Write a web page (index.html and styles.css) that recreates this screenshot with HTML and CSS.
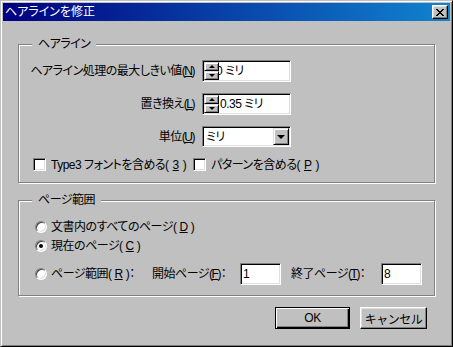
FILE: index.html
```html
<!DOCTYPE html>
<html lang="ja">
<head>
    <meta charset="UTF-8">
    <meta name="viewport" content="width=device-width, initial-scale=1.0">
    <title>ヘアラインを修正</title>

    <link rel="stylesheet" href="styles.css">
</head>
<body>
<div class="window">
    <div class="titlebar">
        <span class="title">ヘアラインを修正</span>
        <button class="close">
            <svg width="8" height="7" viewBox="0 0 8 7" shape-rendering="crispEdges">
                <path d="M0 0h2v1H0zM6 0h2v1H6zM1 1h2v1H1zM5 1h2v1H5zM2 2h4v1H2zM3 3h2v1H3zM2 4h4v1H2zM1 5h2v1H1zM5 5h2v1H5zM0 6h2v1H0zM6 6h2v1H6z" fill="#000"/>
            </svg>
        </button>
    </div>

    <div class="content">
        <fieldset class="group hairline">
            <legend>ヘアライン</legend>
            <div class="form">
                <span class="label">ヘアライン処理の最大しきい値(<span class="key">N</span>)</span>
                <div class="field spinner">
                    <span class="spin"><span class="up"></span><span class="down"></span></span>
                    <span class="value scrolled">0 ミリ</span>
                </div>

                <span class="label">置き換え(<span class="key">L</span>)</span>
                <div class="field spinner">
                    <span class="spin"><span class="up"></span><span class="down"></span></span>
                    <span class="value">0.35 ミリ</span>
                </div>

                <span class="label">単位(<span class="key">U</span>)</span>
                <div class="field combo">
                    <span class="value">ミリ</span>
                    <span class="drop"></span>
                </div>
            </div>
            <div class="checks">
                <span class="check first"><span class="box"></span>Type3 フォントを含める(<span class="key">3</span>)</span>
                <span class="check"><span class="box"></span>パターンを含める(<span class="key">P</span>)</span>
            </div>
        </fieldset>

        <fieldset class="group pages">
            <legend>ページ範囲</legend>
            <div class="radio-row">
                <span class="radio"></span>文書内のすべてのページ(<span class="key">D</span>)
            </div>
            <div class="radio-row">
                <span class="radio checked"></span>現在のページ(<span class="key">C</span>)
            </div>
            <div class="radio-row range">
                <span class="range-radio"><span class="radio"></span>ページ範囲(<span class="key">R</span>)：</span>
                <span class="range-label start">開始ページ(<span class="key">F</span>)：</span>
                <span class="field small first-page">1</span>
                <span class="range-label end">終了ページ(<span class="key">T</span>)：</span>
                <span class="field small">8</span>
            </div>
        </fieldset>

        <div class="buttons">
            <button class="btn default">OK</button>
            <button class="btn cancel">キャンセル</button>
        </div>
    </div>
</div>
</body>
</html>
```

FILE: styles.css
```css
body {
    margin: 0;
    background-color: #c0c0c0;
    font-family: "Liberation Sans", "Noto Sans CJK JP", sans-serif;
    font-size: 12px;
    line-height: 14px;
    letter-spacing: -0.5px;
    color: #000;
    font-feature-settings: "palt";
}

.key {
    margin: 0 -1px;
    text-decoration: underline;
    text-decoration-thickness: 1px;
    text-underline-offset: 1px;
}

.window {
    width: 453px;
    height: 347px;
    box-sizing: border-box;
    border: 1px solid;
    border-color: #c0c0c0 #000 #000 #c0c0c0;
    box-shadow: inset 1px 1px #fff, inset -1px -1px #808080;
    padding: 2px;
    background-color: #c0c0c0;
}

.titlebar {
    height: 18px;
    display: flex;
    align-items: center;
    justify-content: space-between;
    padding: 0 2px;
    background: linear-gradient(to right, #000080, #1084d0);
}

.title {
    color: #fff;
    letter-spacing: 0;
}

.close {
    width: 16px;
    height: 14px;
    padding: 0;
    display: flex;
    align-items: center;
    justify-content: center;
    background-color: #c0c0c0;
    border: 1px solid;
    border-color: #fff #000 #000 #fff;
    box-shadow: inset -1px -1px #808080, inset 1px 1px #dfdfdf;
}

.content {
    padding: 0 15px;
}

.group {
    margin: 0;
    padding: 0;
    border: 1px solid #808080;
    box-shadow: inset 1px 1px #fff, 1px 1px #fff;
}

.group legend {
    margin-left: 13px;
    padding: 0 6px;
    line-height: 14px;
    background-color: #c0c0c0;
}

.hairline {
    margin-top: 16px;
    padding: 9px 0 11px;
}

.pages {
    margin-top: 10px;
    padding: 13px 0 10px;
}

.form {
    display: grid;
    grid-template-columns: 176px 89px;
    column-gap: 7px;
    row-gap: 11px;
    align-items: center;
}

.label {
    text-align: right;
}

.field {
    box-sizing: border-box;
    height: 22px;
    display: flex;
    align-items: center;
    background-color: #fff;
    border: 1px solid;
    border-color: #808080 #fff #fff #808080;
    box-shadow: inset 1px 1px #000, inset -1px -1px #dfdfdf;
    padding: 1px;
}

.spinner {
    align-items: stretch;
}

.spin {
    width: 15px;
    display: flex;
    flex-direction: column;
}

.spin span {
    flex: 1;
    box-sizing: border-box;
    display: flex;
    align-items: center;
    justify-content: center;
    background-color: #c0c0c0;
    border: 1px solid;
    border-color: #dfdfdf #000 #000 #dfdfdf;
    box-shadow: inset 1px 1px #fff, inset -1px -1px #808080;
}

.spin .up::after {
    content: "";
    border-left: 3px solid transparent;
    border-right: 3px solid transparent;
    border-bottom: 3px solid #000;
}

.spin .down::after {
    content: "";
    border-left: 3px solid transparent;
    border-right: 3px solid transparent;
    border-top: 3px solid #000;
}

.value {
    flex: 1;
    padding-left: 1px;
    display: flex;
    align-items: center;
    white-space: nowrap;
}

.scrolled {
    overflow: hidden;
    text-indent: -4px;
}

.combo {
    height: 21px;
    padding-left: 2px;
}

.drop {
    width: 16px;
    height: 17px;
    box-sizing: border-box;
    display: flex;
    align-items: center;
    justify-content: center;
    background-color: #c0c0c0;
    border: 1px solid;
    border-color: #dfdfdf #000 #000 #dfdfdf;
    box-shadow: inset 1px 1px #fff, inset -1px -1px #808080;
}

.drop::after {
    content: "";
    border-left: 4px solid transparent;
    border-right: 4px solid transparent;
    border-top: 4px solid #000;
}

.checks {
    display: flex;
    padding-left: 14px;
    margin-top: 11px;
    height: 13px;
    align-items: center;
}

.check {
    display: flex;
    align-items: center;
    gap: 5px;
    white-space: nowrap;
}

.check.first {
    width: 160px;
}

.box {
    width: 13px;
    height: 13px;
    box-sizing: border-box;
    flex: none;
    background-color: #fff;
    border: 1px solid;
    border-color: #808080 #fff #fff #808080;
    box-shadow: inset 1px 1px #000, inset -1px -1px #dfdfdf;
}

.radio-row {
    display: flex;
    align-items: center;
    gap: 4px;
    height: 13px;
    padding-left: 16px;
    margin-bottom: 6px;
    white-space: nowrap;
}

.radio-row.range {
    height: 22px;
    margin: 11px 0 0;
    gap: 0;
}

.radio {
    width: 12px;
    height: 12px;
    box-sizing: border-box;
    flex: none;
    border-radius: 50%;
    background-color: #fff;
    border: 1px solid;
    border-color: #808080 #fff #fff #808080;
    box-shadow: inset 1px 1px #404040, inset -1px -1px #dfdfdf;
    display: flex;
    align-items: center;
    justify-content: center;
}

.radio.checked::after {
    content: "";
    width: 4px;
    height: 4px;
    border-radius: 50%;
    background-color: #000;
}

.range-radio {
    width: 117px;
    display: flex;
    align-items: center;
    gap: 4px;
}

.range-label {
    width: 88px;
}

.range-label.end {
    width: 90px;
    margin-left: 10px;
}

.field.small {
    width: 41px;
    padding-left: 2px;
}

.buttons {
    display: flex;
    justify-content: flex-end;
    gap: 10px;
    margin: 11px 8px 0 0;
}

.btn {
    height: 22px;
    padding: 0;
    font-family: inherit;
    font-size: 12px;
    letter-spacing: inherit;
    color: #000;
    background-color: #c0c0c0;
    border: 1px solid;
    border-color: #fff #000 #000 #fff;
    box-shadow: inset -1px -1px #808080, inset 1px 1px #dfdfdf;
}

.btn.default {
    width: 75px;
    border-color: #000;
    box-shadow: inset 1px 1px #fff, inset -1px -1px #000, inset -2px -2px #808080;
}

.btn.cancel {
    width: 67px;
}
```
